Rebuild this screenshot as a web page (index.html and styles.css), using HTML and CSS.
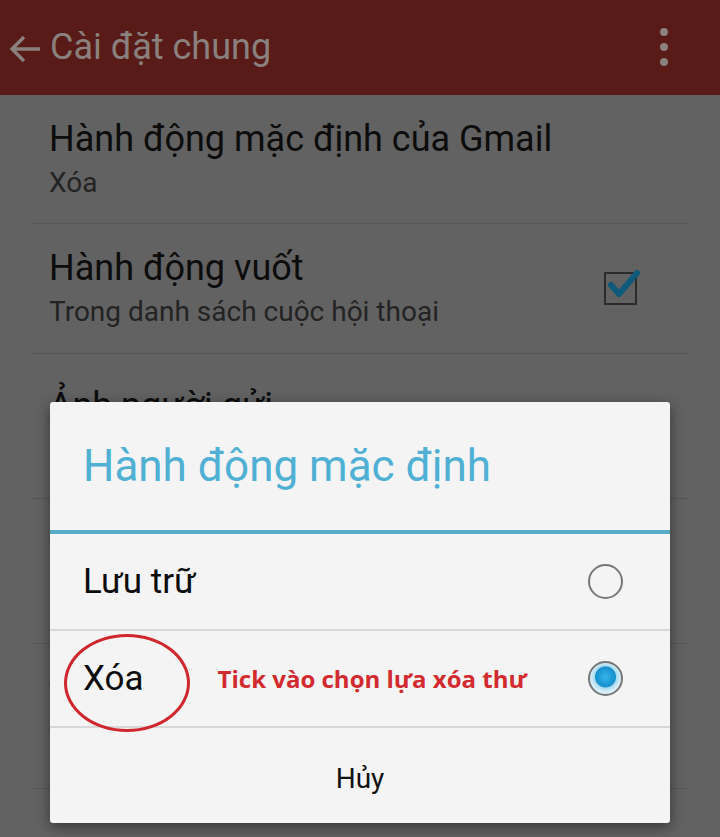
FILE: index.html
```html
<!DOCTYPE html>
<html lang="vi">
<head>
  <meta charset="UTF-8">
  <title>Cài đặt chung</title>
  <link rel="stylesheet" href="styles.css">
</head>
<body>
  <div class="screen">
    <div class="appbar">
      <svg class="back" width="34" height="30" viewBox="0 0 34 30">
        <path d="M32 15H4M16 3L4 15l12 12" fill="none" stroke="#8a817e" stroke-width="3.4"/>
      </svg>
      <span class="appbar-title">Cài đặt chung</span>
      <div class="overflow">
        <span></span><span></span><span></span>
      </div>
    </div>

    <ul class="prefs">
      <li class="pref">
        <div class="pref-text">
          <div class="pref-title">Hành động mặc định của Gmail</div>
          <div class="pref-sub">Xóa</div>
        </div>
      </li>
      <li class="pref">
        <div class="pref-text">
          <div class="pref-title">Hành động vuốt</div>
          <div class="pref-sub">Trong danh sách cuộc hội thoại</div>
        </div>
        <svg class="check" width="40" height="40" viewBox="0 0 40 40">
          <rect x="5" y="6" width="31" height="31" fill="none" stroke="#2b2b2b" stroke-width="2"/>
          <path d="M11 18l8 9L37 6" fill="none" stroke="#0f5a7a" stroke-width="6" stroke-linecap="round" stroke-linejoin="round"/>
        </svg>
      </li>
      <li class="pref">
        <div class="pref-text">
          <div class="pref-title">Ảnh người gửi</div>
          <div class="pref-sub">Hiển thị bên cạnh tên</div>
        </div>
      </li>
      <li class="pref">
        <div class="pref-text">
          <div class="pref-title">Trả lời tất cả</div>
          <div class="pref-sub">Mặc định trả lời thư</div>
        </div>
      </li>
      <li class="pref">
        <div class="pref-text">
          <div class="pref-title">Tự động điều chỉnh thư</div>
          <div class="pref-sub">Thu nhỏ thư cho vừa màn hình</div>
        </div>
      </li>
      <li class="pref">
        <div class="pref-text">
          <div class="pref-title">Tự động tiến</div>
        </div>
      </li>
    </ul>

    <div class="dialog">
      <div class="dialog-title">Hành động mặc định</div>
      <div class="option">
        <span class="option-label">Lưu trữ</span>
        <span class="radio"></span>
      </div>
      <div class="option">
        <span class="option-label">Xóa</span>
        <span class="note">Tick vào chọn lựa xóa thư</span>
        <span class="radio checked"></span>
      </div>
      <div class="dialog-cancel">Hủy</div>
    </div>

    <div class="marker"></div>
  </div>
</body>
</html>
```

FILE: styles.css
```css
body {
  margin: 0;
  font-family: Roboto, "Noto Sans", sans-serif;
}
.screen {
  position: relative;
  width: 720px;
  height: 837px;
  overflow: hidden;
  background-color: #626262;
}

/* app bar, dimmed by the dialog scrim */
.appbar {
  height: 95px;
  background-color: #581b17;
  display: flex;
  align-items: center;
  padding: 0 0 0 8px;
}
.back {
  margin-top: 2px;
}
.appbar-title {
  margin-left: 8px;
  font-size: 36px;
  color: #8a817e;
  margin-top: -2px;
}
.overflow {
  margin-left: auto;
  margin-right: 52px;
  display: flex;
  flex-direction: column;
  gap: 7px;
  margin-top: -2px;
}
.overflow span {
  width: 8px;
  height: 8px;
  border-radius: 50%;
  background-color: #8a817e;
}

/* settings list */
.prefs {
  list-style: none;
  margin: 0;
  padding: 0;
}
.pref {
  display: flex;
  align-items: center;
  margin: 0 32px;
  padding: 0 0 0 17px;
  height: 129px;
  border-bottom: 1px solid #565656;
  color: #0c0c0c;
}
.pref:first-child {
  height: 128px;
}
.pref:nth-child(n+3) {
  height: 144px;
}
.pref-text {
  flex: 1;
}
.pref-title {
  font-size: 36px;
  line-height: 44px;
}
.pref-sub {
  font-size: 28px;
  line-height: 38px;
  margin-top: 3px;
  color: #232323;
}
.check {
  margin-right: 48px;
  margin-top: -4px;
}

/* dialog */
.dialog {
  position: absolute;
  left: 50px;
  top: 402px;
  width: 620px;
  height: 421px;
  background-color: #f4f4f4;
  border-radius: 3px;
  box-shadow: 0 4px 14px rgba(0,0,0,0.45);
  display: flex;
  flex-direction: column;
}
.dialog-title {
  height: 132px;
  box-sizing: border-box;
  border-bottom: 4px solid #57abc6;
  display: flex;
  align-items: center;
  padding-left: 33px;
  font-size: 44px;
  color: #4fb0d4;
}
.option {
  height: 97px;
  display: flex;
  align-items: center;
  padding: 0 47px 0 33px;
  border-bottom: 2px solid #d8d8d8;
  box-sizing: border-box;
}
.option-label {
  font-size: 35px;
  color: #0c0c0c;
}
.note {
  margin-left: 74px;
  font-family: "Open Sans", sans-serif;
  font-weight: bold;
  font-size: 24px;
  color: #d32a2f;
}
.radio {
  margin-left: auto;
  width: 31px;
  height: 31px;
  border-radius: 50%;
  border: 2px solid #777;
  box-sizing: content-box;
}
.radio.checked {
  background: radial-gradient(circle at 50% 45%, #39b4ea 0, #1690cc 10px, #a9dbf0 11px, #d8eef8 15px);
}
.dialog-cancel {
  flex: 1;
  display: flex;
  align-items: center;
  justify-content: center;
  padding-top: 6px;
  font-size: 28px;
  color: #111;
}

/* hand-drawn ring around the selected option */
.marker {
  position: absolute;
  left: 64px;
  top: 634px;
  width: 120px;
  height: 92px;
  border: 3px solid #d0262d;
  border-radius: 50%;
}
```
